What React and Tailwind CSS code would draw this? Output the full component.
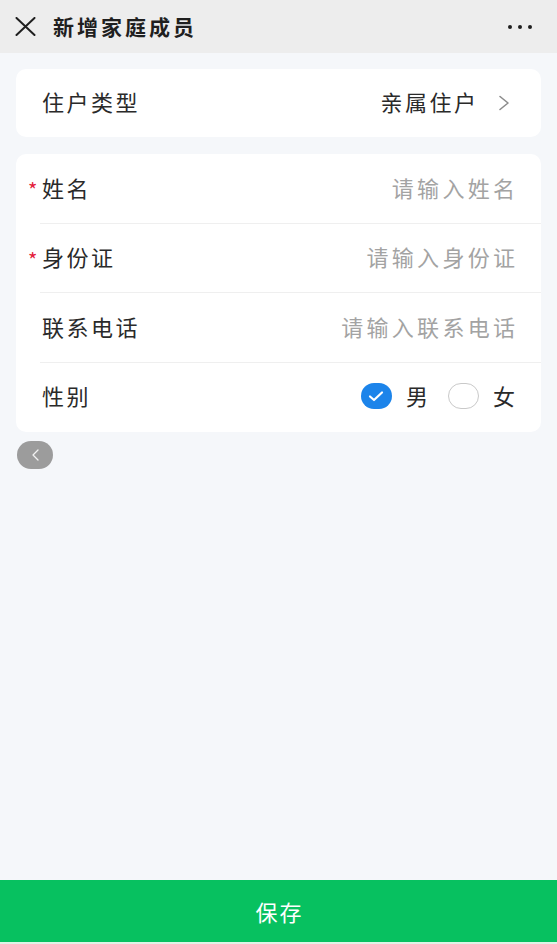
import React from "react";

const font = { fontFamily: '"Noto Sans CJK SC", "Noto Sans", sans-serif' };

function Row({ required, label, placeholder, divider = true, children }) {
  return (
    <div className="relative flex h-[69.5px] items-center pl-[12px] pr-[26px]">
      <div className="flex w-[14px] items-center">
        {required && <span className="mt-[3px] text-[20px] leading-none text-[#e3203a]">*</span>}
      </div>
      <span className="mt-[-3px] text-[22px] tracking-[2.5px] text-[#2a2a2a]">{label}</span>
      <div className="mt-[-3px] flex flex-1 items-center justify-end">
        {placeholder && (
          <span className="mr-[-3.3px] text-[22px] tracking-[3.3px] text-[#a3a3a3]">{placeholder}</span>
        )}
        {children}
      </div>
      {divider && <div className="absolute bottom-0 left-[24px] right-0 h-px bg-[#efefef]" />}
    </div>
  );
}

export default function App() {
  return (
    <div className="flex min-h-[944px] flex-col bg-[#f5f7fa]" style={font}>
      <header className="flex h-[53px] items-center bg-[#ededed] pl-[15px] pr-[25px]">
        <svg width="21" height="19" viewBox="0 0 21 19" className="shrink-0">
          <path d="M1.5 1 L19.5 18 M19.5 1 L1.5 18" stroke="#1f1f1f" strokeWidth="2" strokeLinecap="round" />
        </svg>
        <h1 className="ml-[17px] text-[21px] font-semibold tracking-[3px] text-[#1f1f1f]">新增家庭成员</h1>
        <div className="ml-auto flex items-center gap-[6px]">
          <span className="h-[4px] w-[4px] rounded-full bg-[#1f1f1f]" />
          <span className="h-[4px] w-[4px] rounded-full bg-[#1f1f1f]" />
          <span className="h-[4px] w-[4px] rounded-full bg-[#1f1f1f]" />
        </div>
      </header>

      <main className="flex flex-1 flex-col px-[16px] pt-[16px]">
        <div className="flex h-[68px] items-center rounded-[10px] bg-white pl-[26px] pr-[31px]">
          <span className="mt-[-3px] text-[22px] tracking-[2.5px] text-[#2a2a2a]">住户类型</span>
          <span className="ml-auto mr-[-2.5px] mt-[-3px] text-[22px] tracking-[2.5px] text-[#2a2a2a]">亲属住户</span>
          <svg width="12" height="16" viewBox="0 0 12 16" className="ml-[22px] shrink-0">
            <path d="M2 1.5 L10 8 L2 14.5" fill="none" stroke="#8c8c8c" strokeWidth="1.6" strokeLinecap="round" strokeLinejoin="round" />
          </svg>
        </div>

        <div className="mt-[17px] flex flex-col rounded-[10px] bg-white">
          <Row required label="姓名" placeholder="请输入姓名" />
          <Row required label="身份证" placeholder="请输入身份证" />
          <Row label="联系电话" placeholder="请输入联系电话" />
          <Row label="性别" divider={false}>
            <div className="flex items-center">
              <span className="flex h-[26px] w-[31px] items-center justify-center rounded-full bg-[#1c84ea]">
                <svg width="16" height="12" viewBox="0 0 16 12">
                  <path d="M2 6.5 L6 10 L14 2.5" fill="none" stroke="#ffffff" strokeWidth="2.2" strokeLinecap="round" strokeLinejoin="round" />
                </svg>
              </span>
              <span className="ml-[14px] text-[22px] text-[#2a2a2a]">男</span>
              <span className="ml-[20px] h-[26px] w-[31px] rounded-full border border-[#c9c9c9] bg-white" />
              <span className="ml-[14px] text-[22px] text-[#2a2a2a]">女</span>
            </div>
          </Row>
        </div>

        <button className="ml-[1px] mt-[9px] flex h-[28px] w-[36px] items-center justify-center rounded-full bg-[#9c9c9c]">
          <svg width="9" height="12" viewBox="0 0 9 12">
            <path d="M7 1 L2 6 L7 11" fill="none" stroke="#f2f2f2" strokeWidth="1.3" strokeLinecap="round" strokeLinejoin="round" />
          </svg>
        </button>
      </main>

      <button className="flex h-[62px] w-full items-center justify-center bg-[#07c160] text-[22px] tracking-[2px] text-white">
        <span className="mr-[-2px]">保存</span>
      </button>
      <div className="h-[2px] bg-[#dff3e6]" />
    </div>
  );
}
